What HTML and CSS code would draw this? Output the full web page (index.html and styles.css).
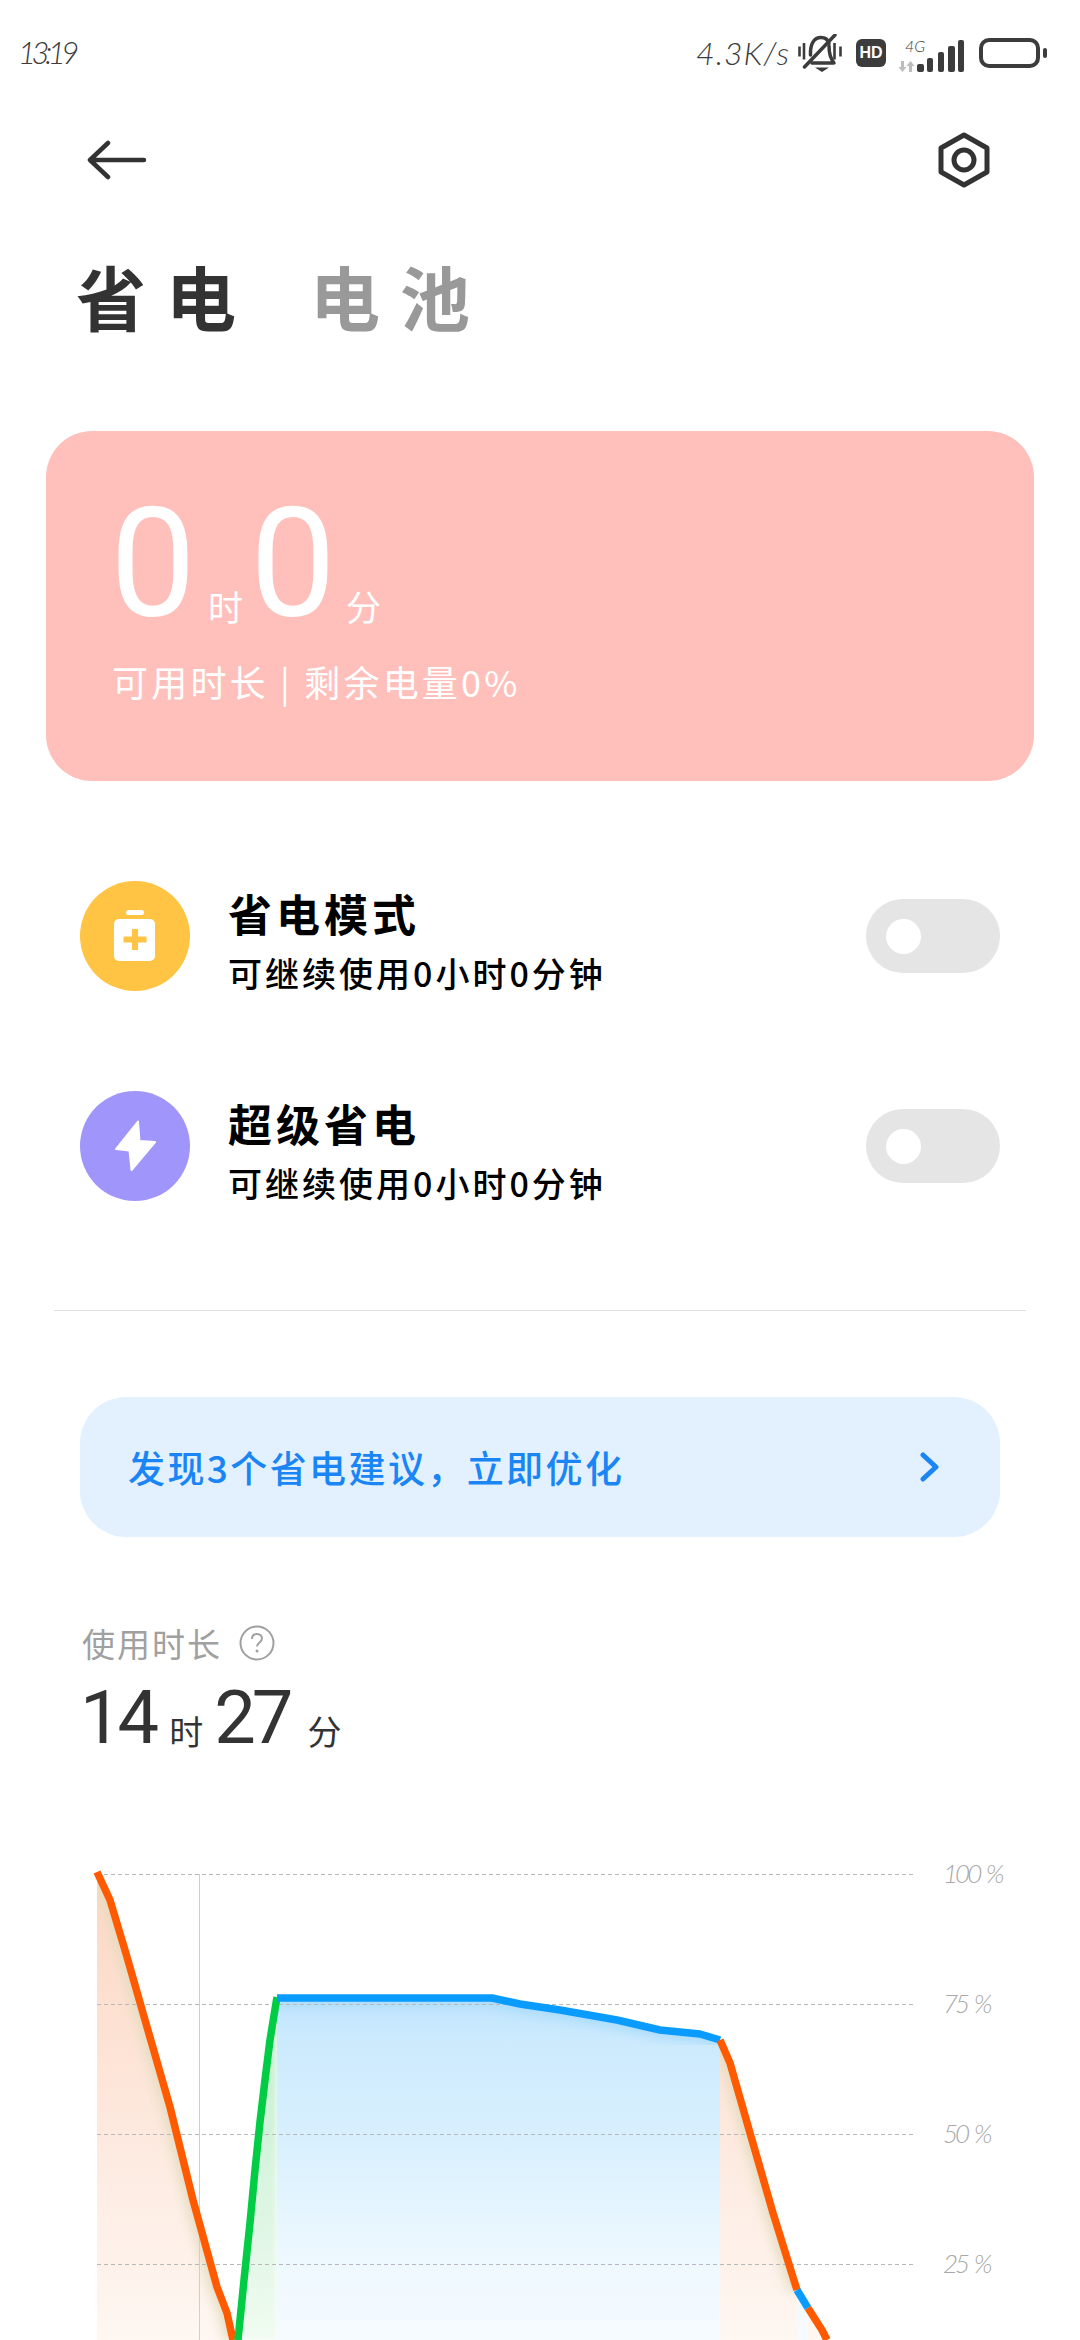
FILE: index.html
```html
<!DOCTYPE html>
<html lang="zh-CN">
<head>
  <meta charset="UTF-8">
  <title>省电</title>
  <link rel="stylesheet" href="styles.css">
</head>
<body>
  <div class="page">

    <!-- Status bar -->
    <div class="status-bar">
      <span class="status-time">13:19</span>
      <div class="status-right">
        <span class="status-speed">4.3K/s</span>
        <svg class="icon-bell" width="44" height="38" viewBox="0 0 44 38">
          <path d="M12.500 21C12 10 16 3.500 23 3.500c4 0 7 2 8 6M31 12c0 8 1 12 5 17H14" fill="none" stroke="#3c3c3c" stroke-width="3.500" stroke-linecap="round" stroke-linejoin="round"/>
          <path d="M17 33.500h14L24 38z" fill="#3c3c3c"/>
          <path d="M37 1 6.500 33" stroke="#3c3c3c" stroke-width="3.500" stroke-linecap="round"/>
          <path d="M1.500 12.500v10M6 9v16.500M36.500 9v16.500M42.500 12.500v10" stroke="#3c3c3c" stroke-width="2.600"/>
        </svg>
        <span class="status-hd">HD</span>
        <div class="status-signal">
          <span class="status-4g">4G</span>
          <svg width="68" height="32" viewBox="0 0 68 32">
            <path d="M4 21h3v6h2.500l-4 5-4-5H4z" fill="#bdbdbd"/>
            <path d="M12 32h3v-6h2.500l-4-5-4 5H12z" fill="#bdbdbd"/>
            <rect x="20" y="24" width="7" height="8" rx="2" fill="#3c3c3c"/>
            <rect x="30" y="18" width="6" height="14" rx="2" fill="#3c3c3c"/>
            <rect x="41" y="12" width="6" height="20" rx="2" fill="#3c3c3c"/>
            <rect x="51" y="6" width="7" height="26" rx="2" fill="#3c3c3c"/>
            <rect x="61" y="0" width="6" height="32" rx="2" fill="#3c3c3c"/>
          </svg>
        </div>
        <svg width="68" height="30" viewBox="0 0 68 30">
          <rect x="2" y="2" width="57" height="26" rx="8" fill="none" stroke="#3c3c3c" stroke-width="4"/>
          <rect x="64" y="10" width="4" height="10" rx="2" fill="#3c3c3c"/>
        </svg>
      </div>
    </div>

    <!-- Back and settings -->
    <div class="nav-bar">
      <svg width="60" height="40" viewBox="0 0 60 40">
        <path d="M57 20H3M21 3 3 20l18 17" fill="none" stroke="#333" stroke-width="4.500" stroke-linecap="round" stroke-linejoin="round"/>
      </svg>
      <svg width="52" height="56" viewBox="0 0 52 56">
        <path d="M26 3l23 13v24L26 53 3 40V16z" fill="none" stroke="#333" stroke-width="5" stroke-linejoin="round"/>
        <circle cx="26" cy="28" r="10" fill="none" stroke="#333" stroke-width="5"/>
      </svg>
    </div>

    <!-- Tabs -->
    <div class="tabs">
      <span class="tab tab-active">省电</span>
      <span class="tab">电池</span>
    </div>

    <!-- Remaining time card -->
    <div class="time-card">
      <div class="time-value">
        <span class="time-num">0</span><span class="time-unit">时</span><span class="time-num time-num-min">0</span><span class="time-unit">分</span>
      </div>
      <div class="time-note">可用时长 | 剩余电量0%</div>
    </div>

    <!-- Modes -->
    <div class="mode-list">
      <div class="mode-row">
        <div class="mode-icon mode-icon-yellow">
          <svg width="42" height="52" viewBox="0 0 42 52">
            <rect x="12" y="0" width="18" height="5" rx="2.500" fill="#fff"/>
            <rect x="0" y="9" width="41" height="42" rx="5" fill="#fff"/>
            <path d="M21 19v21M9.500 29.500h23" stroke="#ffc444" stroke-width="6"/>
          </svg>
        </div>
        <div class="mode-text">
          <div class="mode-title">省电模式</div>
          <div class="mode-sub">可继续使用0小时0分钟</div>
        </div>
        <div class="toggle"><span class="toggle-knob"></span></div>
      </div>
      <div class="mode-row">
        <div class="mode-icon mode-icon-purple">
          <svg width="42" height="52" viewBox="0 0 42 52">
            <path d="M24 1.500 2 29l13.500 1.500L17.500 50 41 22l-15.500-1z" fill="#fff" stroke="#fff" stroke-width="2" stroke-linejoin="round"/>
          </svg>
        </div>
        <div class="mode-text">
          <div class="mode-title">超级省电</div>
          <div class="mode-sub">可继续使用0小时0分钟</div>
        </div>
        <div class="toggle"><span class="toggle-knob"></span></div>
      </div>
    </div>

    <div class="divider"></div>

    <!-- Suggestion banner -->
    <div class="banner">
      <span class="banner-text">发现3个省电建议，立即优化</span>
      <svg width="20" height="30" viewBox="0 0 20 30">
        <path d="M3 3l13 12L3 27" fill="none" stroke="#1a85f5" stroke-width="5" stroke-linecap="round" stroke-linejoin="round"/>
      </svg>
    </div>

    <!-- Usage time -->
    <div class="usage">
      <div class="usage-label">
        <span>使用时长</span>
        <svg width="36" height="36" viewBox="0 0 36 36">
          <circle cx="18" cy="18" r="16.500" fill="none" stroke="#a0a0a0" stroke-width="2"/>
          <path d="M13 14c0-3 2-5 5-5s5 2 5 4.500c0 4-5 4-5 8" fill="none" stroke="#a0a0a0" stroke-width="2"/>
          <circle cx="18" cy="26" r="1.500" fill="#a0a0a0"/>
        </svg>
      </div>
      <div class="usage-value">
        <span class="usage-num">14</span><span class="usage-unit">时</span><span class="usage-num usage-num-min">27</span><span class="usage-unit">分</span>
      </div>
    </div>

    <!-- Battery chart -->
    <svg class="chart" width="1080" height="490" viewBox="0 -10 1080 490">
      <defs>
        <linearGradient id="fill-orange" gradientUnits="userSpaceOnUse" x1="0" y1="40" x2="0" y2="480">
          <stop offset="0" stop-color="#fcd9c5"/>
          <stop offset="0.5" stop-color="#fde8dd"/>
          <stop offset="1" stop-color="#fef7f2"/>
        </linearGradient>
        <linearGradient id="fill-blue" gradientUnits="userSpaceOnUse" x1="0" y1="145" x2="0" y2="480">
          <stop offset="0" stop-color="#c2e5fd"/>
          <stop offset="0.1" stop-color="#cceafd"/>
          <stop offset="0.4" stop-color="#d8f0fe"/>
          <stop offset="0.75" stop-color="#edf8fe"/>
          <stop offset="1" stop-color="#f6fbff"/>
        </linearGradient>
        <linearGradient id="fill-green" gradientUnits="userSpaceOnUse" x1="0" y1="180" x2="0" y2="480">
          <stop offset="0" stop-color="#c4efd0"/>
          <stop offset="1" stop-color="#f0fbf1"/>
        </linearGradient>
        <filter id="soft" x="-10%" y="-10%" width="120%" height="120%">
          <feGaussianBlur stdDeviation="6"/>
        </filter>
        <filter id="soft-green" x="-30%" y="-10%" width="160%" height="120%">
          <feGaussianBlur stdDeviation="3"/>
        </filter>
        <clipPath id="clip-orange-a">
          <path d="M97 12 110 40 127 97 143 153 170 247 193 340 217 427 227 453 233 480H97z"/>
        </clipPath>
        <clipPath id="clip-orange-b">
          <path d="M720 180 730 203 750 273 773 353 797 430V480H720z"/>
        </clipPath>
        <clipPath id="clip-blue">
          <path d="M277 138H492L520 144 560 150 617 160 660 170 700 174 720 180V480H277z"/>
        </clipPath>
      </defs>

      <path d="M97 12 110 40 127 97 143 153 170 247 193 340 217 427 227 453 233 480H97z" fill="url(#fill-orange)"/>
      <path d="M238 480 244 420 250 363 255 310 260 262 265 220 270 180 277 137V480z" fill="url(#fill-green)" filter="url(#soft-green)"/>
      <path d="M277 138H492L520 144 560 150 617 160 660 170 700 174 720 180V480H277z" fill="url(#fill-blue)"/>
      <path d="M720 180 730 203 750 273 773 353 797 430V480H720z" fill="url(#fill-orange)"/>
      <path d="M797 430 808 448V480H797z" fill="url(#fill-blue)"/>
      <path d="M808 448 822 470 827 480H808z" fill="url(#fill-orange)"/>

      <!-- darker edge just under the curve -->
      <g clip-path="url(#clip-orange-a)">
        <path class="chart-glow glow-orange" d="M97 12 110 40 127 97 143 153 170 247 193 340 217 427 227 453 233 480" filter="url(#soft)"/>
      </g>
      <g clip-path="url(#clip-orange-b)">
        <path class="chart-glow glow-orange" d="M720 180 730 203 750 273 773 353 797 430" filter="url(#soft)"/>
      </g>
      <g clip-path="url(#clip-blue)">
        <path class="chart-glow glow-blue" d="M277 138H492L520 144 560 150 617 160 660 170 700 174 720 180" filter="url(#soft)"/>
      </g>

      <path class="chart-grid" d="M97 14.500H913M97 144.500H913M97 274.500H913M97 404.500H913"/>
      <path class="chart-mark" d="M199.500 14V480"/>

      <path class="chart-line line-orange" d="M97 12 110 40 127 97 143 153 170 247 193 340 217 427 227 453 233 480"/>
      <path class="chart-line line-green" d="M238 480 244 420 250 363 255 310 260 262 265 220 270 180 277 137"/>
      <path class="chart-line line-blue" d="M277 138H492L520 144 560 150 617 160 660 170 700 174 720 180"/>
      <path class="chart-line line-orange" d="M720 180 730 203 750 273 773 353 797 430"/>
      <path class="chart-line line-blue" d="M797 430 808 448"/>
      <path class="chart-line line-orange" d="M808 448 822 470 827 480"/>

      <text class="chart-label" x="943" y="23">100 %</text>
      <text class="chart-label" x="943" y="153">75 %</text>
      <text class="chart-label" x="943" y="283">50 %</text>
      <text class="chart-label" x="943" y="413">25 %</text>
    </svg>

  </div>
</body>
</html>
```

FILE: styles.css
```css
html, body {
  margin: 0;
  padding: 0;
  background: #fff;
}

.page {
  width: 1080px;
  height: 2340px;
  overflow: hidden;
  font-family: "Noto Sans CJK SC", "Noto Sans", sans-serif;
  color: #000;
}

/* Status bar */
.status-bar {
  height: 132px;
  box-sizing: border-box;
  padding: 34px 33px 0 18px;
  display: flex;
  justify-content: space-between;
  align-items: flex-start;
}

.status-time,
.status-speed,
.status-4g {
  font-family: Lato, sans-serif;
  font-style: italic;
  font-weight: 300;
  color: #3c3c3c;
}

.status-time {
  font-size: 31px;
  line-height: 36px;
  letter-spacing: -4.5px;
}

.status-right {
  display: flex;
  align-items: center;
  height: 38px;
}

.status-speed {
  font-size: 32px;
  line-height: 38px;
  letter-spacing: 1px;
  margin-right: 8px;
}

.status-hd {
  width: 30px;
  height: 28px;
  margin-left: 14px;
  border-radius: 6px;
  background: #3c3c3c;
  color: #fff;
  font-family: "Liberation Sans", sans-serif;
  font-weight: bold;
  font-size: 16px;
  line-height: 28px;
  text-align: center;
}

.status-signal {
  position: relative;
  width: 68px;
  height: 32px;
  margin: 6px 14px 0 11px;
}

.status-signal svg {
  display: block;
}

.status-4g {
  position: absolute;
  left: 8px;
  top: -2px;
  font-size: 16px;
  line-height: 16px;
}

/* Nav */
.nav-bar {
  height: 56px;
  padding: 0 90px 0 87px;
  display: flex;
  justify-content: space-between;
  align-items: center;
}

/* Tabs */
.tabs {
  display: flex;
  gap: 54px;
  margin: 68px 0 0 76px;
}

.tab {
  font-size: 70px;
  line-height: 80px;
  font-weight: 700;
  letter-spacing: 20px;
  color: #999;
}

.tab-active {
  color: #333;
}

/* Time card */
.time-card {
  height: 350px;
  box-sizing: border-box;
  margin: 95px 46px 0;
  padding: 58px 0 0 64px;
  border-radius: 46px;
  background: #ffc0bb;
  color: #fff;
}

.time-value {
  display: flex;
  align-items: flex-end;
  height: 150px;
}

.time-num {
  font-family: Roboto, sans-serif;
  font-weight: 400;
  font-size: 153px;
  line-height: 150px;
  margin-right: 12px;
}

.time-num-min {
  margin-left: 7px;
  margin-right: 10px;
}

.time-unit {
  font-size: 35px;
  line-height: 50px;
  margin-bottom: 8px;
}

.time-note {
  margin: 20px 0 0 2px;
  font-size: 36px;
  line-height: 44px;
  letter-spacing: 3.2px;
  white-space: pre;
}

/* Modes */
.mode-list {
  margin: 100px 80px 0;
  display: flex;
  flex-direction: column;
  gap: 100px;
}

.mode-row {
  height: 110px;
  display: flex;
  align-items: center;
}

.mode-icon {
  width: 110px;
  height: 110px;
  border-radius: 50%;
  display: flex;
  align-items: center;
  justify-content: center;
}

.mode-icon-yellow {
  background: #ffc444;
}

.mode-icon-purple {
  background: #a095fb;
}

.mode-text {
  flex: 1;
  margin-left: 38px;
  padding-top: 7px;
}

.mode-title {
  font-size: 44px;
  line-height: 56px;
  font-weight: 700;
  letter-spacing: 4px;
}

.mode-sub {
  margin-top: 10px;
  font-size: 34px;
  line-height: 44px;
  font-weight: 500;
  letter-spacing: 3px;
}

.toggle {
  width: 134px;
  height: 74px;
  box-sizing: border-box;
  padding: 20px;
  border-radius: 37px;
  background: #e5e5e5;
}

.toggle-knob {
  display: block;
  width: 35px;
  height: 35px;
  border-radius: 50%;
  background: #fff;
}

.divider {
  height: 1px;
  margin: 109px 54px 0;
  background: #e0e0e0;
}

/* Banner */
.banner {
  height: 140px;
  box-sizing: border-box;
  margin: 86px 80px 0;
  padding: 0 60px 0 48px;
  border-radius: 46px;
  background: #e3f1ff;
  display: flex;
  align-items: center;
  justify-content: space-between;
}

.banner-text {
  font-size: 37px;
  line-height: 46px;
  letter-spacing: 2.4px;
  font-weight: 500;
  color: #1a85f5;
}

/* Usage */
.usage {
  margin: 84px 0 0 80px;
}

.usage-label {
  display: flex;
  align-items: center;
  gap: 17px;
  height: 44px;
  padding-left: 2px;
  font-size: 33px;
  letter-spacing: 2px;
  color: #a0a0a0;
}

.usage-value {
  display: flex;
  align-items: flex-end;
  margin-top: 18px;
  height: 70px;
  color: #333;
}

.usage-num {
  font-family: Roboto, sans-serif;
  font-size: 74px;
  line-height: 70px;
  letter-spacing: -4px;
}

.usage-num-min {
  margin-right: 4px;
}

.usage-unit {
  font-size: 34px;
  line-height: 44px;
  margin: 0 11px 0 14px;
}

/* Chart */
.chart {
  display: block;
  margin-top: 97px;
}

.chart-grid {
  fill: none;
  stroke: #b8b8b8;
  stroke-width: 1;
  stroke-dasharray: 4 3;
}

.chart-mark {
  fill: none;
  stroke: #cfcfcf;
  stroke-width: 1;
}

.chart-line {
  fill: none;
  stroke-width: 7.5;
  stroke-linejoin: round;
}

.line-orange {
  stroke: #ff5a00;
}

.line-green {
  stroke: #00cc44;
}

.line-blue {
  stroke: #0a9bff;
}

.chart-glow {
  fill: none;
  stroke-width: 16;
}

.glow-orange {
  stroke: #e4dcc0;
}

.glow-blue {
  stroke: #a8dcfb;
}

.chart-label {
  font-family: Lato, sans-serif;
  font-style: italic;
  font-weight: 300;
  font-size: 26px;
  letter-spacing: -3px;
  word-spacing: 3px;
  fill: #a8a8a8;
}
```
